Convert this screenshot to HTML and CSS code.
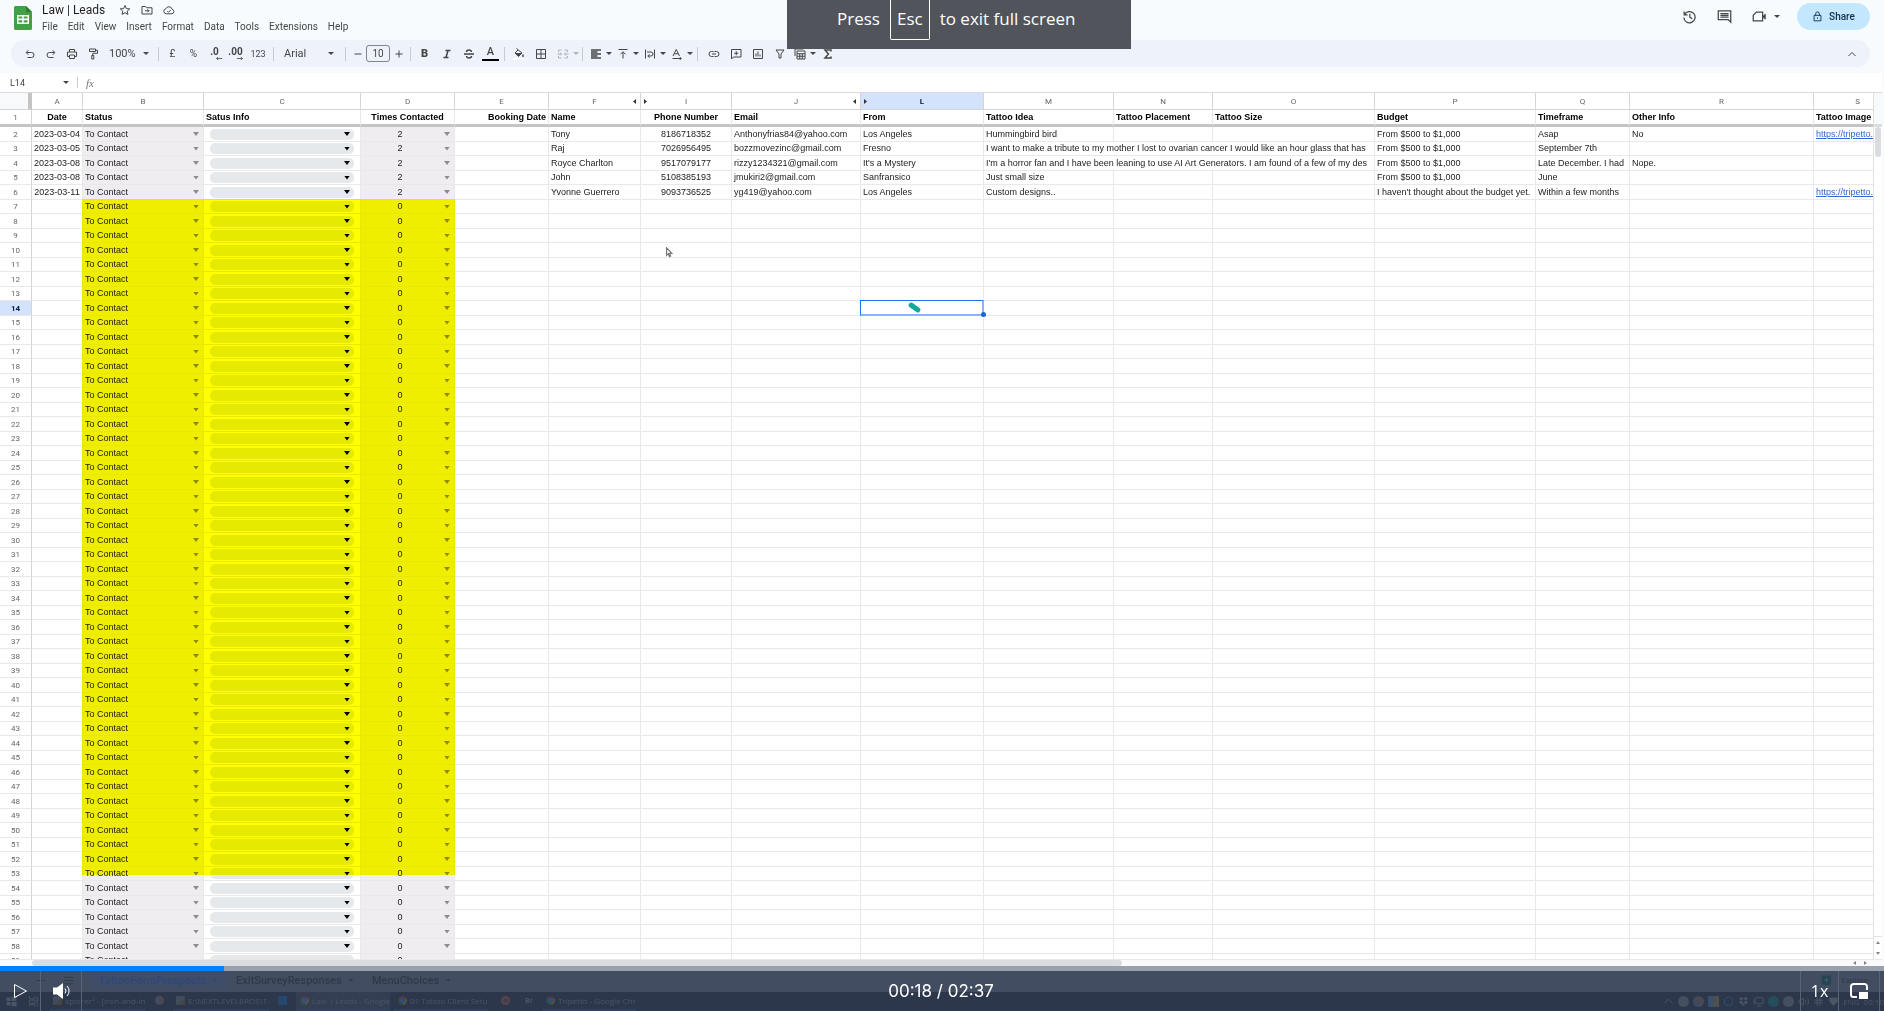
FILE: index.html
```html
<!DOCTYPE html>
<html lang="en">
<head>
    <meta charset="UTF-8">
    <meta name="viewport" content="width=device-width, initial-scale=1.0">
    <title>Law | Leads</title>
    <link rel="stylesheet" href="styles.css">
</head>
<body>
    <header class="topbar">
        <svg class="logo" viewBox="0 0 18 24">
            <path fill="#43a047" d="M1.500 0H12l6 6v16.500a1.500 1.500 0 0 1-1.500 1.500h-15A1.500 1.500 0 0 1 0 22.500v-21A1.500 1.500 0 0 1 1.500 0z"/>
            <path fill="#2e7d32" d="M12 0l6 6h-6z"/>
            <path fill="#fff" fill-rule="evenodd" d="M3 9h12v9H3zM4.500 10.500v2h3.700v-2zM9.700 10.500v2h3.800v-2zM4.500 14.200v2.300h3.700v-2.300zM9.700 14.200v2.300h3.800v-2.300z"/>
        </svg>
        <div class="doc">
            <div class="doc-title">
                <h1>Law | Leads</h1>
                <button aria-label="Star"><svg viewBox="0 0 24 24"><path d="M12 3l2.700 6.200 6.800.6-5.100 4.500 1.500 6.600L12 17.400l-5.900 3.500 1.500-6.600-5.100-4.500 6.800-.6z"/></svg></button>
                <button aria-label="Move"><svg viewBox="0 0 24 24"><path d="M2 5h7l2 2.500h11V20H2zM8 13.500h8M13 10.500l3 3-3 3"/></svg></button>
                <button aria-label="Saved to Drive"><svg viewBox="0 0 24 24"><path d="M6.500 19.500a5 5 0 0 1-.8-9.900 6.600 6.600 0 0 1 12.600 1.200 4.400 4.400 0 0 1-.4 8.700zM8.500 14l2.500 2.500 4.500-4.500"/></svg></button>
            </div>
            <nav class="menus">
                <button>File</button>
                <button>Edit</button>
                <button>View</button>
                <button>Insert</button>
                <button>Format</button>
                <button>Data</button>
                <button>Tools</button>
                <button>Extensions</button>
                <button>Help</button>
            </nav>
        </div>
        <div class="actions">
            <button aria-label="Version history"><svg viewBox="0 0 24 24"><path d="M3.500 4v5.500H9M4 9a9 9 0 1 1-1 4.500M12.500 7.500v5.500l4 2.500"/></svg></button>
            <button aria-label="Comments"><svg viewBox="0 0 24 24"><path d="M2 3h20v18l-4-4H2zM5.500 7.500h13M5.500 10.200h13M5.500 13h13"/></svg></button>
            <button class="meet" aria-label="Join a call"><svg viewBox="0 0 24 24"><path d="M7 5h10v14H2v-9z"/><path class="solid" d="M17 11l5-4v10l-5-4z"/></svg><i class="caret"></i></button>
            <button class="share"><svg viewBox="0 0 24 24"><path d="M4.500 9.500h15v12h-15zM8 9.500V6a4 4 0 0 1 8 0v3.500M12 14v3"/></svg>Share</button>
        </div>
    </header>

    <div class="toolbar">
        <div class="group">
            <button aria-label="Undo"><svg viewBox="0 0 24 24"><path d="M8.500 4.500L4.500 9l4 4.500M5 9h10a5 5 0 0 1 0 10H7"/></svg></button>
            <button aria-label="Redo"><svg viewBox="0 0 24 24"><path d="M15.500 4.500L19.500 9l-4 4.500M19 9H9a5 5 0 0 0 0 10h8"/></svg></button>
            <button aria-label="Print"><svg viewBox="0 0 24 24"><path d="M7 8V3h10v5M7 17H3V8h18v9h-4M7 14h10v7H7z"/></svg></button>
            <button aria-label="Paint format"><svg viewBox="0 0 24 24"><path d="M5 2h12v5H5zM17 4.500h4v6h-9.500V15M9.500 15h4v7h-4z"/></svg></button>
        </div>
        <div class="pick zoom"><select aria-label="Zoom"><option>100%</option></select><i class="caret"></i></div>
        <i class="sep"></i>
        <div class="group">
            <button>£</button>
            <button>%</button>
            <button class="dec" aria-label="Decrease decimal places"><b>.0</b><svg viewBox="0 0 10 6"><path d="M9 3H2M4 1L2 3l2 2"/></svg></button>
            <button class="dec" aria-label="Increase decimal places"><b>.00</b><svg viewBox="0 0 10 6"><path d="M1 3h7M6 1l2 2-2 2"/></svg></button>
            <button class="num">123</button>
        </div>
        <i class="sep"></i>
        <div class="pick font"><select aria-label="Font"><option>Arial</option></select><i class="caret"></i></div>
        <i class="sep"></i>
        <button class="step" aria-label="Decrease font size"><svg viewBox="0 0 24 24"><path d="M5 12h14"/></svg></button>
        <input class="size" aria-label="Font size" value="10">
        <button class="step" aria-label="Increase font size"><svg viewBox="0 0 24 24"><path d="M5 12h14M12 5v14"/></svg></button>
        <i class="sep"></i>
        <div class="group loose">
            <button class="bold">B</button>
            <button aria-label="Italic"><svg class="heavy" viewBox="0 0 24 24"><path d="M9 5h10M5 19h10M14 5l-4 14"/></svg></button>
            <button aria-label="Strikethrough"><svg class="heavy" viewBox="0 0 24 24"><path d="M2 12h20M17 8c-.5-3-3-4-5-4-3 0-5 1.500-5 4M7 16c.5 3 3 4 5 4 3 0 5-1.500 5-4"/></svg></button>
            <button class="ink" aria-label="Text color">A</button>
        </div>
        <i class="sep"></i>
        <div class="group loose">
            <button aria-label="Fill color"><svg viewBox="0 0 24 24"><path class="white" d="M0 20h24v4H0z"/><path class="solid" d="M4 10h14l-7 7z"/><path d="M7 1l11 9-7 7-7-7 6-6"/><path class="solid" d="M20 12c3 4 2 6 0 6s-3-2 0-6z"/></svg></button>
            <button aria-label="Borders"><svg viewBox="0 0 24 24"><path d="M3 3h18v18H3zM12 3v18M3 12h18"/></svg></button>
            <button class="off" aria-label="Merge cells" disabled><svg viewBox="0 0 24 24"><path d="M3 8V4h6M15 4h6v4M3 16v4h6M15 20h6v-4M1 12h8M6 9l3 3-3 3M23 12h-8M18 9l-3 3 3 3"/></svg></button>
        </div>
        <i class="caret off"></i>
        <i class="sep"></i>
        <button class="drop-btn" aria-label="Horizontal align"><svg class="heavy" viewBox="0 0 24 24"><path d="M2 4h20M2 8h13M2 12h20M2 16h13M2 20h20"/></svg><i class="caret"></i></button>
        <button class="drop-btn" aria-label="Vertical align"><svg viewBox="0 0 24 24"><path d="M3 3h18M12 21V8M7 12.500L12 7.500l5 5"/></svg><i class="caret"></i></button>
        <button class="drop-btn" aria-label="Text wrapping"><svg viewBox="0 0 24 24"><path d="M3 3v18M21 3v18M6 8h8a3.500 3.500 0 0 1 0 8H8M11 12.500L7.500 16l3.500 3.500"/></svg><i class="caret"></i></button>
        <button class="drop-btn" aria-label="Text rotation"><svg viewBox="0 0 24 24"><path d="M4 16L10.500 3 17 16M6.500 11.500h8M3 21h17M17.500 18l3 3-3 3"/></svg><i class="caret"></i></button>
        <i class="sep"></i>
        <div class="group loose insert">
            <button aria-label="Insert link"><svg viewBox="0 0 24 24"><path d="M11 7H7a5 5 0 0 0 0 10h4M13 7h4a5 5 0 0 1 0 10h-4M8 12h8"/></svg></button>
            <button aria-label="Insert comment"><svg viewBox="0 0 24 24"><path d="M3 3h19v15H7l-4 4zM12.500 6.500v8M8.500 10.500h8"/></svg></button>
            <button aria-label="Insert chart"><svg viewBox="0 0 24 24"><path d="M3 3h18v18H3zM8 17v-6M12 17V7M16 17v-4"/></svg></button>
            <button aria-label="Create a filter"><svg viewBox="0 0 24 24"><path d="M4 4h16l-6 8v8h-4v-8z"/></svg></button>
        </div>
        <button class="drop-btn" aria-label="Filter views"><svg viewBox="0 0 24 24"><path d="M2 16V2h17M6 6h16v16H6zM6 11.500h16M6 16.500h16M11.500 11v11M16.500 11v11"/></svg><i class="caret"></i></button>
        <button aria-label="Functions"><svg class="heavy" viewBox="0 0 24 24"><path d="M18 7V4H6l7 8-7 8h12v-3"/></svg></button>
        <button class="collapse" aria-label="Hide the menus"><svg viewBox="0 0 24 24"><path d="M5 16l7-7 7 7"/></svg></button>
    </div>

    <div class="formula">
        <input class="name-box" aria-label="Name box" value="L14">
        <i class="caret"></i>
        <i class="sep"></i>
        <label class="fx" for="fx">fx</label>
        <input id="fx" class="fx-input">
    </div>

    <main class="sheet">
        <div class="grid">
            <table>
                <colgroup id="cols"></colgroup>
                <thead>
                    <tr class="letters" id="letters"></tr>
                    <tr class="titles" id="titles"></tr>
                </thead>
                <tbody id="rows"></tbody>
            </table>
            <div class="highlight"></div>
        </div>
        <div class="vscroll">
            <div class="vscroll-head"></div>
            <div class="vthumb"></div>
            <div class="varrows"><i class="up"></i><i class="down"></i></div>
        </div>
    </main>
    <div class="hscroll">
        <div class="hthumb"></div>
        <i class="left"></i><i class="right"></i>
    </div>

    <footer class="player">
        <input class="seek" type="range" aria-label="Seek" min="0" max="1570" value="187">
        <div class="tabs">
            <button class="add" aria-label="Add sheet"><svg viewBox="0 0 24 24"><path d="M3 12h18M12 3v18"/></svg></button>
            <button class="all" aria-label="All sheets"><svg viewBox="0 0 24 24"><path d="M2 5h20M2 12h20M2 19h20"/></svg></button>
            <button class="tab current">TattooFormProspects<i class="caret"></i></button>
            <button class="tab">ExitSurveyResponses<i class="caret"></i></button>
            <button class="tab">MenuChoices<i class="caret"></i></button>
            <button class="explore"><svg viewBox="0 0 24 24"><path class="solid" d="M2 1h20v20h-7l-3 3-3-3H2z"/><path class="plus" d="M12 6v10M7 11h10"/></svg>Explore</button>
        </div>
        <div class="taskbar">
            <svg class="win" viewBox="0 0 24 24"><path d="M1 4l9-1.500V11H1zM12 2l11-1.500V11H12zM1 13h9v8.500L1 20zM12 13h11v10.500L12 22z"/></svg>
            <svg class="view" viewBox="0 0 24 24"><path d="M3 1v5h12V1M3 9h12v7H3zM3 23v-4h12v4M20 1v22M18 9h5"/></svg>
            <span class="task w1"><i class="ico grey"></i>xplorer² - [iron-and-in...</span>
            <span class="pin"><i class="ico orange"></i></span>
            <span class="task w1"><i class="ico grey"></i>E:\NEXTLEVELBROS\T...</span>
            <span class="pin"><i class="ico blue"></i></span>
            <span class="task w2 front"><i class="ico chrome"></i>Law | Leads - Google ...</span>
            <span class="task w2"><i class="ico chrome"></i>01 Tattoo Client Setup...</span>
            <span class="pin"><i class="ico fire"></i></span>
            <span class="pin br">Br</span>
            <span class="task w2"><i class="ico chrome"></i>Tripetto - Google Chr...</span>
            <div class="tray">
                <svg viewBox="0 0 24 24"><path d="M3 16l9-9 9 9"/></svg>
                <i class="ico light"></i>
                <i class="ico orange"></i>
                <i class="ico sq"></i>
                <svg class="hex" viewBox="0 0 24 24"><path d="M12 2l9 5v10l-9 5-9-5V7z"/></svg>
                <svg class="solid" viewBox="0 0 24 24"><path d="M7 2l5 4-5 4-5-4zM17 2l5 4-5 4-5-4zM7 10l5 4-5 4-5-4zM17 10l5 4-5 4-5-4zM12 16l4 3-4 3-4-3z"/></svg>
                <svg viewBox="0 0 24 24"><path d="M5 4h17v13H5zM8 22h10M2 8v10"/></svg>
                <i class="ico teal"></i>
                <i class="ico light"></i>
                <svg viewBox="0 0 24 24"><path d="M2 9h4l6-5v16l-6-5H2zM16 8a6 6 0 0 1 0 8M20 4a11 11 0 0 1 0 16"/></svg>
                <svg viewBox="0 0 24 24"><path d="M9 2v20M15 2v20M2 9h20M2 15h20"/></svg>
                <svg class="solid" viewBox="0 0 24 24"><path d="M3 3h18v9l-9 10-9-10z"/></svg>
                <span>ENG</span>
                <span>00:10</span>
            </div>
        </div>
        <div class="controls">
            <button aria-label="Play"><svg viewBox="0 0 16 16"><path d="M2.500 1.500l12 6.500-12 6.500z"/></svg></button>
            <button aria-label="Volume"><svg viewBox="0 0 18 16"><path class="solid" d="M1 4.500h4L11 0v16l-6-4.500H1z"/><path d="M13 5.500a4 4 0 0 1 0 5M15 3a7 7 0 0 1 0 10"/></svg></button>
            <div class="time">00:18 / 02:37</div>
            <button class="speed">1x</button>
            <button aria-label="Picture in picture"><svg class="pip" viewBox="0 0 18 16"><path d="M7 14H3.500A2.500 2.500 0 0 1 1 11.500v-8A2.500 2.500 0 0 1 3.500 1h11A2.500 2.500 0 0 1 17 3.500V7"/><path class="solid" d="M9 9h9v7H9z"/></svg></button>
        </div>
    </footer>

    <div class="notice">Press <kbd>Esc</kbd> to exit full screen</div>
    <svg class="cursor" viewBox="0 0 12 18"><path d="M1 1v13l3-3 2 5 2-1-2-4.500h4z"/></svg>

    <script>
        // letter, width, title, alignment, marker for hidden neighbours
        const COLUMNS = [
            ['A', 51, 'Date', 'center'],
            ['B', 121, 'Status', 'left'],
            ['C', 157, 'Satus Info', 'left'],
            ['D', 94, 'Times Contacted', 'center'],
            ['E', 94, 'Booking Date', 'right'],
            ['F', 92, 'Name', 'left', 'prev'],
            ['I', 91, 'Phone Number', 'center', 'next'],
            ['J', 129, 'Email', 'left', 'prev'],
            ['L', 123, 'From', 'left', 'next'],
            ['M', 130, 'Tattoo Idea', 'left'],
            ['N', 99, 'Tattoo Placement', 'left'],
            ['O', 162, 'Tattoo Size', 'left'],
            ['P', 161, 'Budget', 'left'],
            ['Q', 94, 'Timeframe', 'left'],
            ['R', 184, 'Other Info', 'left'],
            ['S', 88, 'Tattoo Image', 'left']
        ];

        const LEADS = [
            { A: '2023-03-04', F: 'Tony', I: '8186718352', J: 'Anthonyfrias84@yahoo.com', L: 'Los Angeles', M: 'Hummingbird bird', P: 'From $500 to $1,000', Q: 'Asap', R: 'No', S: 'https://tripetto.app' },
            { A: '2023-03-05', F: 'Raj', I: '7026956495', J: 'bozzmovezinc@gmail.com', L: 'Fresno', M: 'I want to make a tribute to my mother I lost to ovarian cancer I would like an hour glass that has', P: 'From $500 to $1,000', Q: 'September 7th', wide: true },
            { A: '2023-03-08', F: 'Royce Charlton', I: '9517079177', J: 'rizzy1234321@gmail.com', L: "It's a Mystery", M: "I'm a horror fan and I have been leaning to use AI Art Generators. I am found of a few of my des", P: 'From $500 to $1,000', Q: 'Late December. I had', R: 'Nope.', wide: true },
            { A: '2023-03-08', F: 'John', I: '5108385193', J: 'jmukiri2@gmail.com', L: 'Sanfransico', M: 'Just small size', P: 'From $500 to $1,000', Q: 'June' },
            { A: '2023-03-11', F: 'Yvonne Guerrero', I: '9093736525', J: 'yg419@yahoo.com', L: 'Los Angeles', M: 'Custom designs..', P: "I haven't thought about the budget yet.", Q: 'Within a few months', S: 'https://tripetto.app' }
        ];

        const LAST_ROW = 59;
        const ACTIVE_ROW = 14;
        const ACTIVE_COL = 'L';

        document.getElementById('cols').innerHTML = '<col style="width:32px">' +
            COLUMNS.map(c => `<col style="width:${c[1]}px">`).join('');

        document.getElementById('letters').innerHTML = '<th class="corner"></th>' +
            COLUMNS.map(c => `<th class="${c[0] === ACTIVE_COL ? 'on' : ''}">${c[0]}${c[4] ? `<i class="${c[4]}"></i>` : ''}</th>`).join('');

        document.getElementById('titles').innerHTML = '<th class="no">1</th>' +
            COLUMNS.map(c => `<th class="${c[3]}">${c[2]}</th>`).join('');

        function dropdown(kind, value, label) {
            return `<div class="cell-drop ${kind}"><select aria-label="${label}"><option>${value}</option></select><i class="caret"></i></div>`;
        }

        function cell(col, row, lead) {
            const letter = col[0];
            if (letter === 'B') return `<td class="shade">${dropdown('status', 'To Contact', 'Status row ' + row)}</td>`;
            if (letter === 'C') return `<td>${dropdown('chip', '', 'Status info row ' + row)}</td>`;
            if (letter === 'D') return `<td class="shade">${dropdown('times', lead ? 2 : 0, 'Times contacted row ' + row)}</td>`;
            if (letter === ACTIVE_COL && row === ACTIVE_ROW) return '<td class="active"><div class="ring"><i class="mark"></i></div></td>';
            if (!lead) return '<td></td>';
            if (lead.wide && (letter === 'N' || letter === 'O')) return '';
            const span = lead.wide && letter === 'M' ? ' colspan="3"' : '';
            const text = lead[letter] || '';
            return `<td class="${col[3]}"${span}>${letter === 'S' && text ? `<a href="#">${text}</a>` : text}</td>`;
        }

        let html = '';
        for (let row = 2; row <= LAST_ROW; row++) {
            const lead = LEADS[row - 2];
            html += `<tr><th class="no${row === ACTIVE_ROW ? ' on' : ''}">${row}</th>` +
                COLUMNS.map(c => cell(c, row, lead)).join('') + '</tr>';
        }
        document.getElementById('rows').innerHTML = html;

        const seek = document.querySelector('.seek');
        function paintSeek() {
            seek.style.setProperty('--played', (seek.value / seek.max * 100) + '%');
        }
        seek.addEventListener('input', paintSeek);
        paintSeek();
    </script>
</body>
</html>
```

FILE: styles.css
```css
* {
    box-sizing: border-box;
    margin: 0;
    padding: 0;
}

body {
    display: flex;
    flex-direction: column;
    height: 100vh;
    overflow: hidden;
    background-color: #f8fbfe;
    font-family: "Liberation Sans", Arial, sans-serif;
    font-size: 9px;
    color: #222;
}

button,
select,
input {
    border: none;
    background: none;
    font: inherit;
    color: inherit;
    appearance: none;
    outline: none;
}

svg {
    display: block;
    fill: none;
    stroke: currentColor;
    stroke-width: 2;
    flex: none;
}

.solid {
    fill: currentColor;
    stroke: none;
}

.white {
    fill: #fff;
    stroke: none;
}

.heavy {
    stroke-width: 3;
}

.caret {
    flex: none;
    width: 6px;
    height: 3px;
    background-color: currentColor;
    clip-path: polygon(0 0, 100% 0, 50% 100%);
}

.off {
    color: #b0b4b9;
}

/* top bar */
.topbar {
    display: flex;
    height: 40px;
    padding: 0 14px;
    color: #444746;
    font-family: Roboto, sans-serif;
}

.logo {
    width: 18px;
    height: 24px;
    margin: 6px 10px 0 0;
    stroke: none;
}

.doc-title {
    display: flex;
    align-items: center;
    gap: 10px;
    height: 20px;
}

.doc-title h1 {
    font-size: 12px;
    font-weight: 400;
    color: #1f1f1f;
    margin-right: 4px;
}

.doc-title svg {
    width: 12px;
    height: 12px;
}

.menus {
    display: flex;
    gap: 10px;
    font-size: 10px;
    line-height: 14px;
}

.actions {
    display: flex;
    align-items: center;
    gap: 20px;
    height: 27px;
    margin: 3px 0 0 auto;
}

.actions svg {
    width: 15px;
    height: 15px;
}

.meet {
    display: flex;
    align-items: center;
    gap: 7px;
}

.share {
    display: flex;
    align-items: center;
    justify-content: center;
    gap: 6px;
    width: 73px;
    height: 27px;
    margin-left: -3px;
    border-radius: 14px;
    background-color: #c2e7ff;
    color: #14304a;
    font-size: 10px;
    font-weight: 500;
}

.share svg {
    width: 11px;
    height: 11px;
}

/* toolbar */
.toolbar {
    display: flex;
    align-items: center;
    height: 27px;
    margin: 0 14px 6px 11px;
    padding: 0 8px;
    border-radius: 14px;
    background-color: #edf2fb;
    color: #444746;
    font-family: Roboto, sans-serif;
    font-size: 10px;
}

.toolbar button {
    display: flex;
    align-items: center;
    justify-content: center;
    flex: none;
    width: 21px;
    height: 20px;
}

.toolbar svg {
    width: 12px;
    height: 12px;
}

.group {
    display: flex;
}

.loose {
    gap: 1px;
}

.insert {
    padding-left: 2px;
}

.sep {
    width: 1px;
    height: 14px;
    margin: 0 3px;
    background-color: #c7cbd1;
    flex: none;
}

.pick {
    display: flex;
    align-items: center;
    padding: 0 6px 0 7px;
}

.pick select {
    flex: 1;
    min-width: 0;
}

.pick.zoom {
    width: 52px;
    padding-left: 6px;
    font-size: 11px;
}

.pick.font {
    width: 65px;
    padding-right: 8px;
    font-size: 11px;
}

.toolbar .num {
    width: 24px;
    font-size: 9px;
}

.toolbar .dec {
    flex-direction: column;
    font-size: 10px;
    line-height: 9px;
}

.toolbar .dec svg {
    width: 8px;
    height: 5px;
    margin-left: 8px;
    stroke-width: 1;
}

.toolbar .step {
    width: 17px;
}

.size {
    width: 24px;
    height: 17px;
    border: 1px solid #80868b;
    border-radius: 3px;
    text-align: center;
}

.toolbar .bold {
    font-size: 11px;
    font-weight: 900;
}

.toolbar .ink {
    height: 16px;
    margin-top: 1px;
    border: solid #000;
    border-width: 0 0 2px;
    width: 17px;
    margin-left: 2px;
    margin-right: 2px;
    font-size: 11px;
    font-weight: 500;
}

.toolbar .drop-btn {
    justify-content: flex-start;
    gap: 4px;
    width: 27px;
    padding-left: 4px;
}

.toolbar .collapse {
    margin-left: auto;
}

/* formula bar */
.formula {
    display: flex;
    align-items: center;
    height: 20px;
    margin-right: 2px;
    background-color: #fff;
    border-bottom: 1px solid #d9dbde;
    color: #444746;
}

.name-box {
    width: 63px;
    padding-left: 10px;
    font-family: Roboto, sans-serif;
}

.formula .sep {
    height: 11px;
    margin: 0 8px;
}

.fx {
    font: italic 11px "Liberation Serif", serif;
    color: #777;
}

.fx-input {
    flex: 1;
    padding: 0 8px;
}

/* sheet */
.sheet {
    display: flex;
    flex: 1;
    min-height: 0;
    margin-right: 2px;
    background-color: #fff;
}

.grid {
    position: relative;
    flex: 1;
    min-width: 0;
    overflow: hidden;
    border-right: 1px solid #e1e1e1;
}

table {
    table-layout: fixed;
    width: 0;
    border-collapse: separate;
    border-spacing: 0;
}

th,
td {
    height: 14px;
    padding: 0 2px;
    border: solid #e9e9e9;
    border-width: 0 1px 1px 0;
    line-height: 13px;
    font-weight: 400;
    text-align: left;
    white-space: nowrap;
    overflow: hidden;
}

tbody tr:nth-child(odd) > * {
    height: 15px;
}

.center {
    text-align: center;
}

.right {
    text-align: right;
}

.letters th {
    position: relative;
    height: 17px;
    border-color: #d5d5d5;
    text-align: center;
    font-family: Roboto, sans-serif;
    font-size: 8px;
    color: #666;
}

.letters .corner {
    background-color: #f8f9fa;
    border-right: 4px solid #c4c4c4;
}

.letters .on,
.no.on {
    background-color: #d3e3fd;
    color: #041e49;
    font-weight: 700;
}

.prev,
.next {
    position: absolute;
    top: 6px;
    width: 3px;
    height: 5px;
    background-color: #333;
}

.prev {
    right: 4px;
    clip-path: polygon(100% 0, 100% 100%, 0 50%);
}

.next {
    left: 3px;
    clip-path: polygon(0 0, 100% 50%, 0 100%);
}

.titles th {
    height: 17px;
    border-bottom: 3px solid #c4c4c4;
    font-weight: 700;
    color: #000;
}

.no,
.titles .no {
    text-align: center;
    font-family: Roboto, sans-serif;
    font-size: 8px;
    font-weight: 400;
    color: #666;
    border-right-color: #d5d5d5;
}

.titles .center {
    text-align: center;
}

.titles .right {
    text-align: right;
}

td a {
    color: #3367d6;
}

td:has(.cell-drop) {
    padding: 0;
}

.shade {
    background-color: #efedef;
}

.cell-drop {
    display: flex;
    align-items: center;
    height: 13px;
    padding-right: 4px;
    color: #8c8c8c;
}

.cell-drop .caret {
    height: 4px;
}

.cell-drop select {
    flex: 1;
    min-width: 0;
    height: 13px;
    padding-left: 2px;
    line-height: 13px;
    color: #222;
}

.times select {
    margin-right: 5px;
    padding: 0;
    text-align: center;
    text-align-last: center;
}

.chip {
    height: 11px;
    margin: 0 6px;
    border-radius: 5px;
    background-color: #e6e9eb;
    color: #000;
}

.chip select {
    height: 11px;
}

.active {
    position: relative;
    overflow: visible;
}

.ring {
    position: absolute;
    inset: -1px;
    display: flex;
    align-items: center;
    justify-content: center;
    border: solid #1a73e8;
    border-width: 1px 2px 2px 1px;
    border-right-color: #8ab4f8;
    border-bottom-color: #8ab4f8;
}

.ring::after {
    content: "";
    position: absolute;
    right: -4px;
    bottom: -3px;
    width: 5px;
    height: 5px;
    border-radius: 50%;
    background-color: #1967d2;
}

.mark {
    width: 13px;
    height: 5px;
    margin-right: 14px;
    border-radius: 2px;
    background-color: #12a89d;
    transform: rotate(35deg);
}

/* marker pen drawn over the rows still to fill */
.highlight {
    position: absolute;
    left: 82px;
    top: 106px;
    width: 373px;
    height: 676px;
    background-color: #ff0;
    mix-blend-mode: multiply;
    pointer-events: none;
}

.vscroll {
    display: flex;
    flex-direction: column;
    width: 8px;
    background-color: #fff;
}

.vscroll-head {
    height: 34px;
    background-color: #f8f9fa;
    border-bottom: 3px solid #dadce0;
}

.vthumb {
    width: 6px;
    height: 30px;
    margin-left: 1px;
    border-radius: 3px;
    background-color: #dadce0;
}

.varrows {
    display: flex;
    flex-direction: column;
    align-items: center;
    gap: 8px;
    margin-top: auto;
    padding: 4px 0;
    border-top: 1px solid #e1e1e1;
}

.up,
.down {
    width: 4px;
    height: 3px;
    background-color: #888;
    clip-path: polygon(0 0, 100% 0, 50% 100%);
}

.up {
    clip-path: polygon(50% 0, 100% 100%, 0 100%);
}

.hscroll {
    display: flex;
    align-items: center;
    height: 7px;
    margin-right: 2px;
    padding: 0 11px 0 32px;
    background-color: #fafafa;
    border-top: 1px solid #e8e8e8;
}

.hthumb {
    width: 1090px;
    height: 6px;
    margin-right: auto;
    border-radius: 3px;
    background-color: #dadce0;
}

.hscroll .left,
.hscroll .right {
    width: 3px;
    height: 4px;
    margin: 0 4px;
    background-color: #888;
    clip-path: polygon(0 0, 100% 50%, 0 100%);
}

.hscroll .left {
    clip-path: polygon(100% 0, 100% 100%, 0 50%);
}

/* video player */
.player {
    position: relative;
    background-color: #434d61;
    font-family: "Open Sans", sans-serif;
}

.seek {
    display: block;
    width: 100%;
    height: 5px;
    background: linear-gradient(to right, #007fff var(--played), #9aa1ae var(--played));
}

.seek::-webkit-slider-thumb {
    appearance: none;
    width: 0;
    height: 5px;
}

.tabs {
    display: flex;
    align-items: stretch;
    height: 21px;
    padding: 0 16px 0 35px;
    color: #2f394b;
    font-family: Roboto, sans-serif;
    font-size: 11px;
    font-weight: 500;
}

.tabs button {
    display: flex;
    align-items: center;
    height: 18px;
}

.tabs svg {
    width: 11px;
    height: 11px;
}

.tabs .all {
    margin: 0 16px 0 17px;
}

.tabs .tab {
    gap: 6px;
    padding: 0 9px;
}

.tabs .current {
    background-color: #404d68;
    color: #2f4778;
}

.tabs .explore {
    gap: 10px;
    margin-left: auto;
    font-size: 8px;
    font-weight: 400;
}

.explore .solid {
    fill: #254554;
}

.explore .plus {
    stroke: #4b6070;
}

.taskbar {
    display: flex;
    align-items: center;
    height: 19px;
    padding-left: 6px;
    background-color: #2d374b;
    color: #4b5568;
    font-size: 8px;
    white-space: nowrap;
}

.taskbar svg {
    width: 11px;
    height: 11px;
}

.taskbar .win {
    fill: #4b5568;
    stroke: none;
}

.taskbar .view {
    margin: 0 11px;
}

.task,
.pin {
    display: flex;
    align-items: center;
    gap: 3px;
    height: 19px;
    border-bottom: 2px solid #30415f;
    flex: none;
    overflow: hidden;
}

.w1 {
    width: 96px;
    padding-left: 3px;
}

.w2 {
    width: 94px;
    margin-right: 4px;
    padding-left: 4px;
}

.front {
    background-color: #343e52;
}

.pin {
    width: 27px;
    justify-content: center;
    border-color: transparent;
}

.pin.br {
    width: 20px;
    margin-right: 3px;
    font-size: 7px;
    font-weight: 700;
}

.ico {
    flex: none;
    width: 9px;
    height: 9px;
    border-radius: 50%;
    opacity: 0.7;
}

.grey {
    border-radius: 1px;
    background: linear-gradient(135deg, #4b5568 60%, #554a42 60%);
}

.orange {
    background: linear-gradient(45deg, #39517c, #66503f);
}

.blue {
    border-radius: 1px;
    background-color: #24507f;
}

.fire {
    background: radial-gradient(#44406b 30%, #6c4a3e 40%);
}

.chrome {
    background: radial-gradient(#31598f 35%, transparent 38%), conic-gradient(from 300deg, #643a43 33%, #6c5c3b 33% 66%, #2c5748 66%);
}

.light {
    background-color: #505a6c;
}

.teal {
    background-color: #245763;
}

.sq {
    border-radius: 1px;
    background: linear-gradient(90deg, #31598f, #6c5c3b);
}

.hex {
    color: #28527d;
}

.tray {
    display: flex;
    align-items: center;
    gap: 4px;
    margin-left: auto;
}

.tray svg,
.tray .ico {
    width: 11px;
    height: 11px;
}

.tray .solid {
    fill: #4b5568;
}

.controls {
    position: absolute;
    inset: 5px 0 0;
    display: flex;
    padding-right: 4px;
    color: #fff;
}

.controls button {
    display: flex;
    align-items: center;
    justify-content: center;
    width: 41px;
    border-right: 1px solid #596376;
}

.controls svg {
    width: 18px;
    height: 16px;
    stroke-width: 1;
}

.controls .pip {
    stroke-width: 2;
}

.time {
    flex: 1;
    align-self: center;
    text-align: center;
    font-family: Inter, sans-serif;
    font-size: 17px;
    line-height: 18px;
}

.controls .speed {
    width: 39px;
    border-left: 1px solid #596376;
    font-size: 16px;
    line-height: 16px;
}

/* full screen notice */
.notice {
    position: absolute;
    top: 0;
    left: 787px;
    display: flex;
    gap: 10px;
    height: 49px;
    padding: 0 56px 0 50px;
    background-color: #51545b;
    color: #fff;
    font-family: "Open Sans", sans-serif;
    font-size: 17px;
    line-height: 38px;
    white-space: nowrap;
}

.notice kbd {
    height: 40px;
    padding: 0 6px;
    border: 1px solid #fff;
    border-top: none;
    border-radius: 0 0 2px 2px;
    font: inherit;
}

.cursor {
    position: absolute;
    left: 666px;
    top: 247px;
    width: 7px;
    height: 11px;
    fill: #fff;
    stroke: #777;
}
```
